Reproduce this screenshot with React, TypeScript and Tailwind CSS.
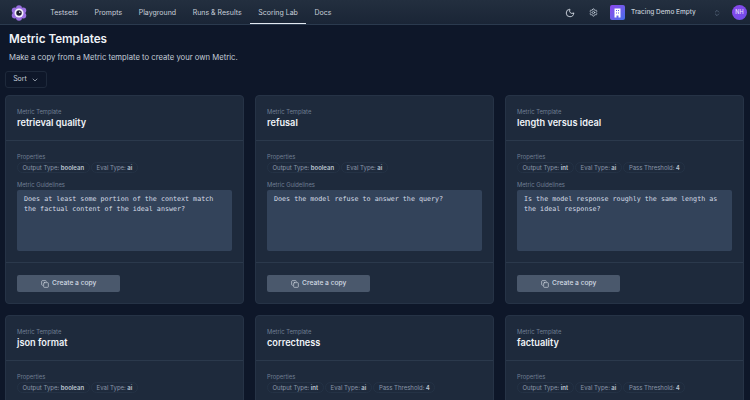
import { ChevronDown, ChevronsUpDown, Copy, Moon, Settings } from "lucide-react";

const navItems = ["Testsets", "Prompts", "Playground", "Runs & Results", "Scoring Lab", "Docs"];

type Template = {
  name: string;
  outputType: string;
  threshold?: string;
  guidelines: string;
};

const templates: Template[] = [
  {
    name: "retrieval quality",
    outputType: "boolean",
    guidelines: "Does at least some portion of the context match the factual content of the ideal answer?",
  },
  { name: "refusal", outputType: "boolean", guidelines: "Does the model refuse to answer the query?" },
  {
    name: "length versus ideal",
    outputType: "int",
    threshold: "4",
    guidelines: "Is the model response roughly the same length as the ideal response?",
  },
  { name: "json format", outputType: "boolean", guidelines: "" },
  { name: "correctness", outputType: "int", threshold: "4", guidelines: "" },
  { name: "factuality", outputType: "int", threshold: "4", guidelines: "" },
];

function Logo() {
  return (
    <svg width="16" height="16" viewBox="0 0 32 32" className="mt-[1px]">
      <g fill="#9a6fe0">
        <circle cx="16" cy="6.5" r="6" />
        <circle cx="16" cy="25.5" r="6" />
        <circle cx="7.5" cy="11" r="6" />
        <circle cx="24.5" cy="11" r="6" />
        <circle cx="7.5" cy="21" r="6" />
        <circle cx="24.5" cy="21" r="6" />
      </g>
      <circle cx="16" cy="16" r="9" fill="#f4f1fb" />
      <circle cx="16" cy="16" r="5.5" fill="#1a1a2e" />
      <circle cx="17.5" cy="14.5" r="1.5" fill="#f4f1fb" />
    </svg>
  );
}

function OrgIcon() {
  return (
    <div className="flex h-[15px] w-[15px] items-center justify-center rounded-[2px] bg-gradient-to-br from-[#8b46ec] to-[#3f6ee8]">
      <svg width="9" height="10" viewBox="0 0 18 20" fill="white">
        <path d="M3 1h12v18h-4v-4H7v4H3z" />
        <g fill="#5a5ae8">
          <rect x="6" y="4" width="2" height="2" />
          <rect x="10" y="4" width="2" height="2" />
          <rect x="6" y="9" width="2" height="2" />
          <rect x="10" y="9" width="2" height="2" />
        </g>
      </svg>
    </div>
  );
}

function Header() {
  return (
    <header className="flex h-[25px] shrink-0 items-center justify-between border-b border-[#2b3a4e] bg-gradient-to-b from-[#232f3f] to-[#1a2536] pl-[11px] pr-[3px]">
      <div className="flex h-full items-center">
        <Logo />
        <nav className="ml-[15px] flex h-full items-stretch">
          {navItems.map((item) => (
            <span
              key={item}
              className={
                item === "Scoring Lab"
                  ? "flex items-center border-b border-[#e2e8f0] px-[8.3px] pt-[3px] text-[#c9d0da]"
                  : "flex items-center px-[8.3px] pt-[3px] text-[#c9d0da]"
              }
            >
              {item}
            </span>
          ))}
        </nav>
      </div>
      <div className="mt-[1px] flex items-center">
        <Moon size={10} className="text-[#e2e8f0]" />
        <Settings size={9} className="ml-[14px] text-[#cbd5e1]" />
        <div className="ml-[12px]">
          <OrgIcon />
        </div>
        <span className="ml-[6px] w-[82px] text-[6.5px] font-medium text-[#c3ccd7]">Tracing Demo Empty</span>
        <ChevronsUpDown size={8} className="text-[#64748b]" />
        <div className="ml-[11px] flex h-[15px] w-[15px] items-center justify-center rounded-full bg-gradient-to-br from-[#8b46ec] to-[#6d4ee8] text-[5.5px] font-medium text-[#e9e2fb]">
          NH
        </div>
      </div>
    </header>
  );
}

function Pill({ label, value }: { label: string; value: string }) {
  return (
    <span className="flex h-[11px] items-center rounded-full border border-[#243245] px-[4.5px] text-[6px] text-[#8996a8]">
      {label}:<span className="ml-[1.5px] font-semibold text-[#bcc6d2]">{value}</span>
    </span>
  );
}

function TemplateCard({ template }: { template: Template }) {
  return (
    <div className="flex h-[209px] flex-col rounded-[4px] border border-[#263346] bg-[#1e2a3c]">
      <div className="h-[45px] shrink-0 border-b border-[#2b394c] px-[11px] pt-[11px]">
        <div className="text-[5.8px] leading-[9px] text-[#6f7e93]">Metric Template</div>
        <div className="text-[9.2px] font-semibold leading-[13px] text-[#eef2f7]">{template.name}</div>
      </div>
      <div className="h-[122px] shrink-0 border-b border-[#2b394c] px-[11px] pt-[11px]">
        <div className="text-[5.8px] leading-[9px] text-[#6f7e93]">Properties</div>
        <div className="mt-[1px] flex gap-[1.5px]">
          <Pill label="Output Type" value={template.outputType} />
          <Pill label="Eval Type" value="ai" />
          {template.threshold && <Pill label="Pass Threshold" value={template.threshold} />}
        </div>
        <div className="mt-[7px] text-[5.8px] leading-[9px] text-[#6f7e93]">Metric Guidelines</div>
        <div className="mt-[1px] h-[61px] rounded-[2px] bg-[#33435a] px-[7px] py-[4px] font-['DejaVu_Sans_Mono',monospace] text-[6.7px] leading-[10px] text-[#d5dce6]">
          {template.guidelines}
        </div>
      </div>
      <div className="px-[11px] pt-[12px]">
        <button className="flex h-[17px] w-[103px] items-center justify-center gap-[3.5px] rounded-[2px] bg-[#4a586c] text-[6.7px] font-medium text-[#d3dae3]">
          <Copy size={8} />
          Create a copy
        </button>
      </div>
    </div>
  );
}

export default function App() {
  return (
    <div className="flex h-screen flex-col overflow-hidden bg-[#0e1729] font-['Inter',sans-serif] text-[7px]">
      <Header />
      <main className="px-[5px]">
        <h1 className="ml-[4px] mt-[7px] text-[11.7px] font-semibold leading-[15px] text-[#eef2f7]">Metric Templates</h1>
        <p className="ml-[4px] mt-[5px] text-[7.7px] leading-[12px] text-[#c3ccd7]">
          Make a copy from a Metric template to create your own Metric.
        </p>
        <button className="mt-[7px] flex h-[17px] w-[42px] items-center justify-center gap-[4px] rounded-[3px] border border-[#1e293b] text-[7px] text-[#c3ccd7]">
          Sort
          <ChevronDown size={8} />
        </button>
        <div className="mt-[7px] grid grid-cols-3 gap-x-[11px] gap-y-[11px] pr-[1px]">
          {templates.map((t) => (
            <TemplateCard key={t.name} template={t} />
          ))}
        </div>
      </main>
    </div>
  );
}
